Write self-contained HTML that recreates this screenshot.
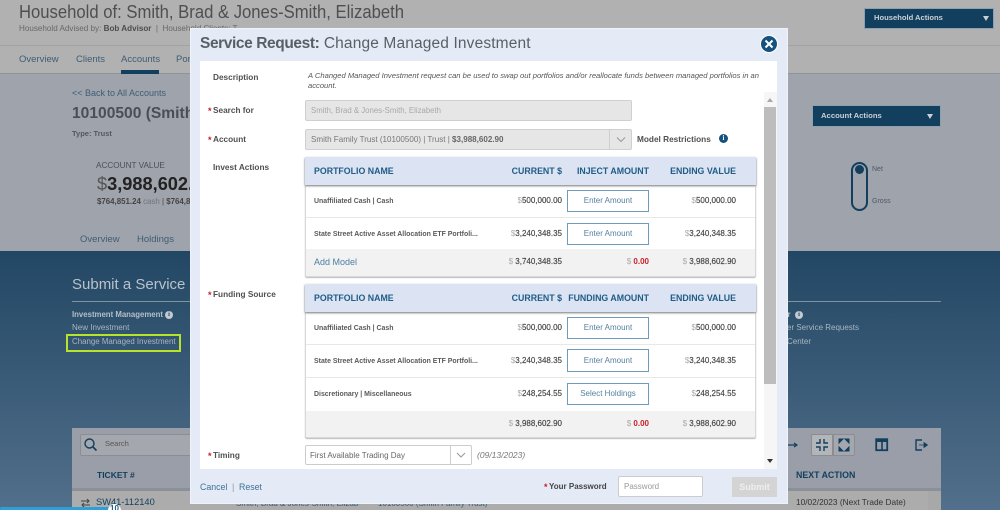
<!DOCTYPE html>
<html><head><meta charset="utf-8"><style>
html,body{margin:0;padding:0}
#p{position:relative;width:1000px;height:510px;overflow:hidden;background:#9fa3ab;font-family:"Liberation Sans",sans-serif;color:#444}
#p div,#p span.a{position:absolute;box-sizing:border-box}
.t{white-space:nowrap}
b{font-weight:700}
.lb{font-size:8.25px;font-weight:700;color:#505050;white-space:nowrap}
.req{color:#c8202a;font-weight:700;font-size:9px;white-space:nowrap}
.th{font-size:8.800px;font-weight:700;color:#1f5c86;white-space:nowrap;line-height:12px}
.thr{text-align:right;width:100px}
.cell{font-size:6.95px;font-weight:700;color:#5a5a5a;white-space:nowrap;line-height:10px}
.num{font-size:8px;font-weight:400;color:#444;white-space:nowrap;line-height:10px;text-align:right;-webkit-text-stroke:.15px #444}
.num i{font-style:normal;color:#aaa;-webkit-text-stroke:0}
.btn{border:1px solid #6f9cbc;background:#fff;color:#54829f;font-size:8px;text-align:center;line-height:20px;white-space:nowrap}
</style></head><body><div id="p">

<!-- header -->
<div style="left:0;top:0;width:1000px;height:74px;background:#b1b1b1;border-bottom:1px solid #8f939a"></div>
<div style="left:0;top:45px;width:1000px;height:1px;background:#a2a2a2"></div>
<div class="t" style="left:19px;top:1px;font-size:18px;line-height:22px;color:#4f4f4f;transform:scaleX(.925);transform-origin:0 0">Household of: Smith, Brad &amp; Jones-Smith, Elizabeth</div>
<div class="t" style="left:19px;top:23px;font-size:8.1px;line-height:12px;color:#686868">Household Advised by: <b style="color:#4d4d4d">Bob Advisor</b> &nbsp;|&nbsp; Household Clients: T</div>
<div class="t" style="left:19px;top:53px;font-size:9.500px;line-height:13px;color:#3e5d76">Overview</div>
<div class="t" style="left:76px;top:53px;font-size:9.500px;line-height:13px;color:#3e5d76">Clients</div>
<div class="t" style="left:121px;top:53px;font-size:9.500px;line-height:13px;color:#3e5d76">Accounts</div>
<div class="t" style="left:176px;top:53px;font-size:9.500px;line-height:13px;color:#3e5d76">Portfolios</div>
<div style="left:121px;top:70px;width:38px;height:4px;background:#123f5d"></div>
<div style="left:864px;top:8px;width:130px;height:21px;background:#123f5d;border:1px solid #8da0b0"></div>
<div class="t" style="left:874px;top:12px;font-size:7.600px;font-weight:700;line-height:12px;color:#c9d1d8">Household Actions</div>
<div style="left:983px;top:15.500px;width:0;height:0;border-left:3.500px solid transparent;border-right:3.500px solid transparent;border-top:5px solid #c9d1d8"></div>

<!-- account -->
<div class="t" style="left:72px;top:87px;font-size:9px;line-height:12px;color:#3e5d76">&lt;&lt; Back to All Accounts</div>
<div class="t" style="left:72px;top:104px;font-size:15.600px;font-weight:700;line-height:20px;color:#4b4f55">10100500 (Smith Family Trust)</div>
<div class="t" style="left:72px;top:128px;font-size:7.500px;font-weight:700;line-height:11px;color:#54585e">Type: Trust</div>
<div class="t" style="left:96px;top:160px;font-size:8.200px;line-height:12px;color:#4b4f55">ACCOUNT VALUE</div>
<div class="t" style="left:97px;top:172px;font-size:18.200px;line-height:24px;color:#222"><span style="color:#555">$</span><b>3,988,602.90</b></div>
<div class="t" style="left:97px;top:196px;font-size:7.900px;line-height:11px;color:#444"><b>$764,851.24</b> <span style="color:#70747a">cash</span> | <b>$764,851.24</b></div>
<div class="t" style="left:80px;top:233px;font-size:9.500px;line-height:13px;color:#3e5d76">Overview</div>
<div class="t" style="left:137px;top:233px;font-size:9.500px;line-height:13px;color:#3e5d76">Holdings</div>
<div class="t" style="left:190px;top:233px;font-size:9.500px;line-height:13px;color:#3e5d76">Transactions</div>
<div style="left:812px;top:105px;width:129px;height:22px;background:#123f5d;border:1px solid #8da0b0"></div>
<div class="t" style="left:821px;top:110px;font-size:7.700px;font-weight:700;line-height:12px;color:#c9d1d8">Account Actions</div>
<div style="left:927px;top:113.500px;width:0;height:0;border-left:3.500px solid transparent;border-right:3.500px solid transparent;border-top:5px solid #c9d1d8"></div>
<div style="left:851px;top:162px;width:17px;height:49px;border:2px solid #123f5d;border-radius:9px"></div>
<div style="left:855px;top:165px;width:9px;height:9px;border-radius:50%;background:#123f5d"></div>
<div class="t" style="left:872px;top:165px;font-size:7px;line-height:10px;color:#4b5a68">Net</div>
<div class="t" style="left:872px;top:197px;font-size:7px;line-height:10px;color:#4b5a68">Gross</div>

<!-- dark section -->
<div style="left:0;top:251px;width:1000px;height:259px;background:linear-gradient(#224764,#526f8b)"></div>
<div class="t" style="left:72px;top:275px;font-size:15px;line-height:20px;color:#b8c2cb">Submit a Service Request</div>
<div style="left:72px;top:301px;width:869px;height:1px;background:#7f929f"></div>
<div class="t" style="left:72px;top:309px;font-size:7.800px;font-weight:700;line-height:12px;color:#b5bfc8">Investment Management</div>
<div style="left:165px;top:311px;width:8px;height:8px;border-radius:50%;background:#c3c9cf;color:#224764;font:700 6.500px/8px 'Liberation Serif',serif;text-align:center">i</div>
<div class="t" style="left:72px;top:322px;font-size:8px;line-height:12px;color:#a9b6c1">New Investment</div>
<div style="left:66px;top:334px;width:115px;height:18px;border:2px solid #b7e32a"></div>
<div class="t" style="left:72px;top:336px;font-size:7.900px;line-height:12px;color:#a9b6c1">Change Managed Investment</div>
<div style="left:783px;top:309px;width:20px;font-size:8px;font-weight:700;line-height:12px;color:#b5bfc8;white-space:nowrap">er</div>
<div style="left:795px;top:311px;width:8px;height:8px;border-radius:50%;background:#c3c9cf;color:#224764;font:700 6.500px/8px 'Liberation Serif',serif;text-align:center">i</div>
<div class="t" style="left:787px;top:322px;font-size:8px;line-height:12px;color:#a9b6c1">er Service Requests</div>
<div class="t" style="left:787px;top:336px;font-size:8px;line-height:12px;color:#a9b6c1">Center</div>

<!-- table behind -->
<div style="left:72px;top:428px;width:869px;height:82px;background:#999ea8"></div>
<div style="left:72px;top:491px;width:869px;height:19px;background:#acacac"></div>
<div style="left:72px;top:488px;width:869px;height:3px;background:#8b8f97"></div>
<div style="left:80px;top:434px;width:120px;height:22px;background:#a4a7ad;border:1px solid #8a8d94;border-radius:2px"></div>
<svg style="position:absolute;left:83px;top:437px" width="15" height="15" viewBox="0 0 15 15"><circle cx="6.500" cy="6.500" r="4.500" fill="none" stroke="#123f5d" stroke-width="1.400"/><path d="M10 10l3.500 3.500" stroke="#123f5d" stroke-width="1.600"/></svg>
<div class="t" style="left:105px;top:438px;font-size:7.500px;line-height:12px;color:#555">Search</div>
<div class="t" style="left:97px;top:469px;font-size:8.500px;font-weight:700;line-height:12px;color:#123f5d">TICKET #</div>
<svg style="position:absolute;left:80px;top:498px" width="11" height="10" viewBox="0 0 11 10"><path d="M1 3h8M7 1l2 2-2 2M10 7H2M4 5L2 7l2 2" fill="none" stroke="#444" stroke-width="1"/></svg>
<div class="t" style="left:96px;top:496px;font-size:9.300px;line-height:12px;color:#123f5d">SW41-112140</div>
<div class="t" style="left:236px;top:498px;font-size:8px;line-height:11px;color:#3e5d76">Smith, Brad &amp; Jones-Smith, Elizab-</div>
<div class="t" style="left:378px;top:498px;font-size:8px;line-height:11px;color:#3e5d76">10100500 (Smith Family Trust)</div>
<div class="t" style="left:796px;top:469px;font-size:8.800px;font-weight:700;line-height:12px;color:#123f5d">NEXT ACTION</div>
<div class="t" style="left:796px;top:496px;font-size:8.300px;line-height:12px;color:#333">10/02/2023 (Next Trade Date)</div>
<svg style="position:absolute;left:787px;top:439px" width="16" height="12" viewBox="0 0 16 12"><path d="M0 6h10M7 4l3 2-3 2" fill="none" stroke="#123f5d" stroke-width="1.200"/></svg>
<div style="left:811px;top:434px;width:22px;height:22px;background:#b3b5b9;border:1px solid #8a8d94;border-radius:2px 0 0 2px"></div>
<div style="left:833px;top:434px;width:22px;height:22px;background:#a4a7ad;border:1px solid #8a8d94;border-radius:0 2px 2px 0"></div>
<svg style="position:absolute;left:811px;top:434px" width="44" height="22" viewBox="0 0 44 22"><path d="M9 5v4H5M13 5v4h4M9 17v-4H5M13 17v-4h4" fill="none" stroke="#123f5d" stroke-width="1.400"/><path d="M28 5h4l-4 4zM38 5h-4l4 4zM28 17h4l-4-4zM38 17h-4l4-4z" fill="#123f5d" stroke="#123f5d"/></svg>
<svg style="position:absolute;left:875px;top:438px" width="14" height="14" viewBox="0 0 14 14"><rect x="1.200" y="1.200" width="11" height="11" fill="none" stroke="#123f5d" stroke-width="1.800"/><path d="M1 2h12v2H1z" fill="#123f5d"/><path d="M7 2v10" stroke="#123f5d" stroke-width="1.600"/></svg>
<svg style="position:absolute;left:914px;top:438px" width="14" height="14" viewBox="0 0 14 14"><path d="M8 2H2v10h6" fill="none" stroke="#123f5d" stroke-width="1.400"/><path d="M5 7h5V4.500L13.500 7 10 9.500V7" fill="#123f5d" stroke="#123f5d" stroke-width=".8"/></svg>
<div style="left:928px;top:491px;width:13px;height:19px;background:#a8a8a8"></div>
<div style="left:0;top:507px;width:110px;height:3px;background:#2f9fd8;border-radius:2px"></div>
<div style="left:108px;top:504px;width:13px;height:13px;border-radius:50%;background:#fff;color:#1f5c86;font:700 8px/9px 'Liberation Sans',sans-serif;text-align:center">10</div>

<!-- modal -->
<div style="left:190px;top:28px;width:598px;height:476px;background:#e4eaf6;border:1px solid #eef2fa"></div>
<div style="left:200px;top:61px;width:577px;height:408px;background:#fff"></div>
<div class="t" style="left:200px;top:33px;font-size:15.500px;line-height:22px;color:#5a5f66;letter-spacing:.14px"><b style="letter-spacing:-.4px">Service Request:</b> Change Managed Investment</div>
<div style="left:760px;top:35px;width:18px;height:18px;border-radius:50%;background:#15527d;border:1px solid #fff"></div>
<svg style="position:absolute;left:760px;top:35px" width="18" height="18" viewBox="0 0 18 18"><path d="M5.500 5.500l7 7M12.500 5.500l-7 7" stroke="#fff" stroke-width="2"/></svg>

<div class="lb" style="left:213px;top:72px;line-height:12px">Description</div>
<div class="t" style="left:308px;top:71px;font-size:7.600px;line-height:10px;font-style:italic;color:#555">A Changed Managed Investment request can be used to swap out portfolios and/or reallocate funds between managed portfolios in an<br>account.</div>

<div class="req" style="left:208px;top:105px;line-height:12px">*</div>
<div class="lb" style="left:213px;top:105px;line-height:12px">Search for</div>
<div style="left:305px;top:100px;width:327px;height:21px;background:#e6e6e6;border:1px solid #cfcfcf;border-radius:2px"></div>
<div class="t" style="left:311px;top:105px;font-size:7.800px;line-height:11px;color:#a8a8a8">Smith, Brad &amp; Jones-Smith, Elizabeth</div>

<div class="req" style="left:208px;top:134px;line-height:12px">*</div>
<div class="lb" style="left:213px;top:134px;line-height:12px">Account</div>
<div style="left:305px;top:129px;width:327px;height:21px;background:#e6e6e6;border:1px solid #cfcfcf;border-radius:2px"></div>
<div style="left:609px;top:129px;width:1px;height:21px;background:#cfcfcf"></div>
<svg style="position:absolute;left:616px;top:136px" width="10" height="7" viewBox="0 0 10 7"><path d="M1 1.500l4 4 4-4" fill="none" stroke="#999" stroke-width="1"/></svg>
<div class="t" style="left:311px;top:134px;font-size:8.050px;line-height:11px;color:#777">Smith Family Trust (10100500) | Trust | <b style="color:#666">$3,988,602.90</b></div>
<div class="lb" style="left:637px;top:134px;line-height:12px">Model Restrictions</div>
<div style="left:719px;top:134px;width:9px;height:9px;border-radius:50%;background:#15527d;color:#fff;font:700 7px/9px 'Liberation Serif',serif;text-align:center">i</div>

<div class="lb" style="left:213px;top:162px;line-height:12px">Invest Actions</div>

<!-- table 1 -->
<div style="left:305px;top:157px;width:451px;height:120px;background:#fff;border:1px solid #d8d8d8;border-radius:2px;box-shadow:0 1px 1px #bbb"></div>
<div style="left:305px;top:157px;width:451px;height:28px;background:#dce4f4;box-shadow:0 1px 2px #777"></div>
<div class="th" style="left:314px;top:165px">PORTFOLIO NAME</div>
<div class="th thr" style="left:462px;top:165px">CURRENT $</div>
<div class="th thr" style="left:549px;top:165px">INJECT AMOUNT</div>
<div class="th thr" style="left:636px;top:165px">ENDING VALUE</div>
<div class="cell" style="left:314px;top:196px;margin-top:.6px">Unaffiliated Cash | Cash</div>
<div class="num" style="left:480px;width:82px;top:196px"><i>$</i>500,000.00</div>
<div class="btn" style="left:567px;top:190px;width:82px;height:22px">Enter Amount</div>
<div class="num" style="left:654px;width:82px;top:196px"><i>$</i>500,000.00</div>
<div style="left:306px;top:217px;width:449px;height:1px;background:#e8e8e8"></div>
<div class="cell" style="left:314px;top:230px">State Street Active Asset Allocation ETF Portfoli...</div>
<div class="num" style="left:480px;width:82px;top:229px"><i>$</i>3,240,348.35</div>
<div class="btn" style="left:567px;top:223px;width:82px;height:22px">Enter Amount</div>
<div class="num" style="left:654px;width:82px;top:229px"><i>$</i>3,240,348.35</div>
<div style="left:306px;top:249px;width:449px;height:27px;background:#f2f2f2"></div>
<div class="t" style="left:314px;top:256px;font-size:9px;line-height:12px;color:#4a7fa3">Add Model</div>
<div class="num" style="left:480px;width:82px;top:257px"><i>$</i> 3,740,348.35</div>
<div class="num" style="left:567px;width:82px;top:257px"><i>$</i> <b style="color:#c8202a;-webkit-text-stroke:0">0.00</b></div>
<div class="num" style="left:654px;width:82px;top:257px"><i>$</i> 3,988,602.90</div>

<div class="req" style="left:208px;top:289px;line-height:12px">*</div>
<div class="lb" style="left:213px;top:289px;line-height:12px">Funding Source</div>

<!-- table 2 -->
<div style="left:305px;top:284px;width:451px;height:154px;background:#fff;border:1px solid #d8d8d8;border-radius:2px;box-shadow:0 1px 1px #bbb"></div>
<div style="left:305px;top:284px;width:451px;height:28px;background:#dce4f4;box-shadow:0 1px 2px #777"></div>
<div class="th" style="left:314px;top:292px">PORTFOLIO NAME</div>
<div class="th thr" style="left:462px;top:292px">CURRENT $</div>
<div class="th thr" style="left:549px;top:292px">FUNDING AMOUNT</div>
<div class="th thr" style="left:636px;top:292px">ENDING VALUE</div>
<div class="cell" style="left:314px;top:324px">Unaffiliated Cash | Cash</div>
<div class="num" style="left:480px;width:82px;top:323px"><i>$</i>500,000.00</div>
<div class="btn" style="left:567px;top:317px;width:82px;height:22px">Enter Amount</div>
<div class="num" style="left:654px;width:82px;top:323px"><i>$</i>500,000.00</div>
<div style="left:306px;top:344px;width:449px;height:1px;background:#e8e8e8"></div>
<div class="cell" style="left:314px;top:357px">State Street Active Asset Allocation ETF Portfoli...</div>
<div class="num" style="left:480px;width:82px;top:356px"><i>$</i>3,240,348.35</div>
<div class="btn" style="left:567px;top:349px;width:82px;height:23px;line-height:21px">Enter Amount</div>
<div class="num" style="left:654px;width:82px;top:356px"><i>$</i>3,240,348.35</div>
<div style="left:306px;top:377px;width:449px;height:1px;background:#e8e8e8"></div>
<div class="cell" style="left:314px;top:390px">Discretionary | Miscellaneous</div>
<div class="num" style="left:480px;width:82px;top:389px"><i>$</i>248,254.55</div>
<div class="btn" style="left:567px;top:383px;width:82px;height:22px">Select Holdings</div>
<div class="num" style="left:654px;width:82px;top:389px"><i>$</i>248,254.55</div>
<div style="left:306px;top:411px;width:449px;height:26px;background:#f2f2f2"></div>
<div class="num" style="left:480px;width:82px;top:419px"><i>$</i> 3,988,602.90</div>
<div class="num" style="left:567px;width:82px;top:419px"><i>$</i> <b style="color:#c8202a;-webkit-text-stroke:0">0.00</b></div>
<div class="num" style="left:654px;width:82px;top:419px"><i>$</i> 3,988,602.90</div>

<div class="req" style="left:208px;top:450px;line-height:12px">*</div>
<div class="lb" style="left:213px;top:450px;line-height:12px">Timing</div>
<div style="left:305px;top:445px;width:167px;height:20px;background:#fff;border:1px solid #ccc;border-radius:2px"></div>
<div style="left:450px;top:445px;width:1px;height:20px;background:#ccc"></div>
<svg style="position:absolute;left:456px;top:452px" width="10" height="7" viewBox="0 0 10 7"><path d="M1 1l4 4 4-4" fill="none" stroke="#999" stroke-width="1"/></svg>
<div class="t" style="left:310px;top:450px;font-size:8px;line-height:11px;color:#666">First Available Trading Day</div>
<div class="t" style="left:477px;top:450px;font-size:8.500px;line-height:11px;font-style:italic;color:#777">(09/13/2023)</div>

<!-- scrollbar -->
<div style="left:764px;top:92px;width:13px;height:377px;background:#f6f6f6"></div>
<div style="left:764px;top:107px;width:12px;height:277px;background:#bdbdbd"></div>
<div style="left:767px;top:98px;width:0;height:0;border-left:3.500px solid transparent;border-right:3.500px solid transparent;border-bottom:4px solid #a8a8a8"></div>
<div style="left:767px;top:459px;width:0;height:0;border-left:3.500px solid transparent;border-right:3.500px solid transparent;border-top:4px solid #333"></div>

<!-- footer -->
<div class="t" style="left:200px;top:481px;font-size:8.800px;line-height:12px;color:#3f7397">Cancel</div>
<div class="t" style="left:232px;top:481px;font-size:9px;line-height:12px;color:#8a9aa8">|</div>
<div class="t" style="left:239px;top:481px;font-size:8.800px;line-height:12px;color:#3f7397">Reset</div>
<div class="req" style="left:544px;top:481px;line-height:12px">*</div>
<div class="lb" style="left:549px;top:481px;line-height:12px;color:#444;font-size:8px">Your Password</div>
<div style="left:618px;top:476px;width:85px;height:21px;background:#fff;border:1px solid #ccc;border-radius:2px"></div>
<div class="t" style="left:624px;top:481px;font-size:8px;line-height:11px;color:#999">Password</div>
<div style="left:732px;top:477px;width:45px;height:20px;background:#d4d4d4;color:#eee;font-size:9px;font-weight:700;line-height:20px;text-align:center">Submit</div>
</div></body></html>
